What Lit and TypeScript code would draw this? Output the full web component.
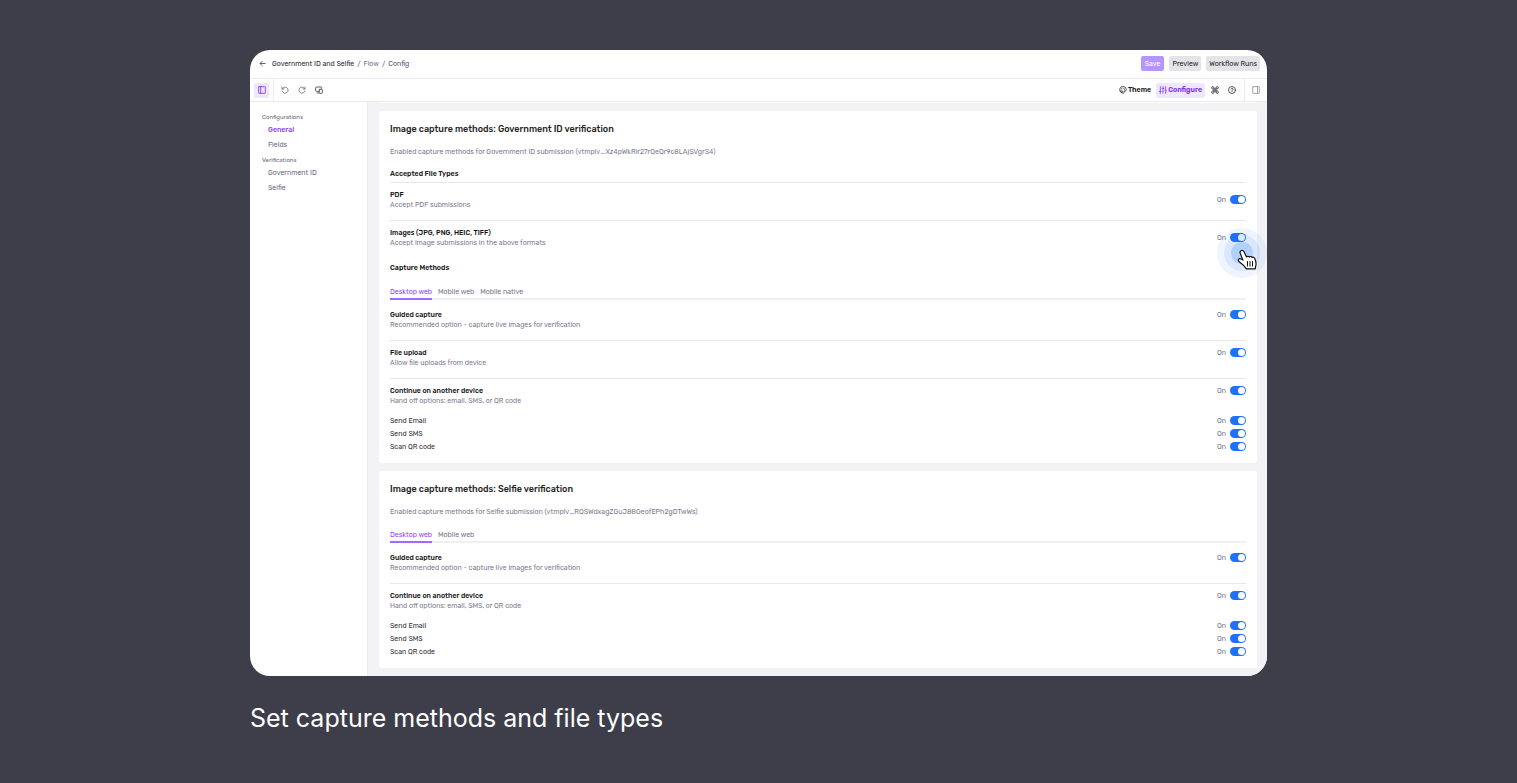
import { LitElement, html, css, svg, nothing } from "lit";
import { customElement, property } from "lit/decorators.js";

interface Option { id: string; title: string; note?: string }
interface Section {
  id: string;
  title: string;
  note: string;
  fileTypes?: Option[];
  tabs: string[];
  methods: Option[];
}

const HANDOFF: Option[] = [
  { id: "email", title: "Send Email" },
  { id: "sms", title: "Send SMS" },
  { id: "qr", title: "Scan QR code" },
];
const GUIDED: Option = { id: "guided", title: "Guided capture", note: "Recommended option - capture live images for verification" };
const UPLOAD: Option = { id: "upload", title: "File upload", note: "Allow file uploads from device" };
const CONTINUE: Option = { id: "continue", title: "Continue on another device", note: "Hand off options: email, SMS, or QR code" };

const SECTIONS: Section[] = [
  {
    id: "gov",
    title: "Image capture methods: Government ID verification",
    note: "Enabled capture methods for Government ID submission (vtmplv_Xz4pWkRir27rQeQr9c8LAjSVgrS4)",
    fileTypes: [
      { id: "pdf", title: "PDF", note: "Accept PDF submissions" },
      { id: "img", title: "Images (JPG, PNG, HEIC, TIFF)", note: "Accept image submissions in the above formats" },
    ],
    tabs: ["Desktop web", "Mobile web", "Mobile native"],
    methods: [GUIDED, UPLOAD, CONTINUE],
  },
  {
    id: "selfie",
    title: "Image capture methods: Selfie verification",
    note: "Enabled capture methods for Selfie submission (vtmplv_RQSWdxagZGuJ8BGeofEPh2gDTwWs)",
    tabs: ["Desktop web", "Mobile web"],
    methods: [GUIDED, CONTINUE],
  },
];

const icon = (body: unknown, size = 8) => html`<svg width=${size} height=${size} viewBox="0 0 24 24" fill="none"
  stroke="currentColor" stroke-width="2" stroke-linecap="round" stroke-linejoin="round" aria-hidden="true">${body}</svg>`;

const ICONS = {
  back: svg`<path d="M21 12H4M11 4.500L3.500 12l7.500 7.500" stroke-width="3.200"/>`,
  panelLeft: svg`<rect x="2" y="2" width="20" height="20" rx="1.500" stroke-width="2.400"/><path d="M8 2v20" stroke-width="2.400"/>`,
  panelRight: svg`<rect x="2" y="2" width="20" height="20" rx="1.500" stroke-width="2.400"/><path d="M16.500 2v20" stroke-width="2.400"/>`,
  undo: svg`<path d="M3 3v6h6M3.500 9a9.200 9.200 0 1 1-.3 6" stroke-width="2.400"/>`,
  redo: svg`<path d="M21 3v6h-6M20.500 9a9.200 9.200 0 1 0 .3 6" stroke-width="2.400"/>`,
  devices: svg`<path d="M11 16H4a2 2 0 0 1-2-2V5a2 2 0 0 1 2-2h14a2 2 0 0 1 2 2v2M6 21h5" stroke-width="2.600"/><rect x="13" y="10" width="9" height="12" rx="1.500" stroke-width="2.600"/>`,
  palette: svg`<path d="M8 20.500A10 10 0 1 1 22 11.500c0 2-1.300 3.500-3 3.500h-4v4c0 2-1 3-2.500 3S10 21 10 19.500V15H4" stroke-width="2.300"/><path d="M8 8.500h.1M12.500 6.500h.1M16.500 9.500h.1" stroke-width="3"/>`,
  sliders: svg`<path d="M4 2v12M4 19v3M12 2v3M12 10v12M20 2v10M20 17v5M1.500 16.500h5M9.500 7.500h5M17.500 14.500h5" stroke-width="2.400"/>`,
  command: svg`<path d="M9 9H5.500A3.500 3.500 0 1 1 9 5.500v13A3.500 3.500 0 1 1 5.500 15h13a3.500 3.500 0 1 1-3.500 3.500v-13A3.500 3.500 0 1 1 18.500 9z" stroke-width="2.300"/>`,
  help: svg`<circle cx="12" cy="12" r="10.500" stroke-width="2.200"/><path d="M9 9.500a3 3 0 1 1 4.500 2.600c-1 .6-1.500 1-1.500 2M12 17.500v.1" stroke-width="2.200"/>`,
};

@customElement("toggle-switch")
export class ToggleSwitch extends LitElement {
  @property() label = "";
  static styles = css`
    :host { display: block; flex: none; }
    label { display: flex; align-items: center; gap: 4px; color: #75758a; line-height: 9px; }
    input {
      appearance: none; margin: 0; width: 16px; height: 9px; border-radius: 5px; background: #d0d0d8;
      display: flex; align-items: center; padding: 1px; box-sizing: border-box;
    }
    input:checked { background: #1d72f8; justify-content: flex-end; }
    input::before { content: ""; width: 7px; height: 7px; border-radius: 50%; background: #fff; }
  `;
  render() {
    return html`<label><span>On</span><input type="checkbox" role="switch" aria-label=${this.label} checked></label>`;
  }
}

@customElement("capture-card")
export class CaptureCard extends LitElement {
  @property({ attribute: false }) section!: Section;
  static styles = css`
    :host { display: block; background: #fff; border-radius: 3px; padding: 12px 11px 10px; }
    h2, h3, h4, p { margin: 0; }
    h2 { font-size: 9px; line-height: 13px; font-weight: 500; color: #1f1f24; }
    h3 { font-size: 7px; line-height: 11px; font-weight: 600; color: #1f1f24; }
    h4 { font-size: 7px; line-height: 10px; font-weight: 500; color: #111114; }
    p { line-height: 9px; color: #7c7c90; }
    .note { margin: 11px 0 12px; }
    .ruled { padding-bottom: 3px; border-bottom: 1px solid #e8e8eb; }
    .spaced { margin-top: 3px; }
    .option { display: flex; justify-content: space-between; align-items: flex-start; padding: 7px 0 11px; border-bottom: 1px solid #e8e8eb; }
    .option:last-child { border-color: transparent; }
    .methods .option:last-child { padding-bottom: 8px; }
    .types toggle-switch { padding-top: 5px; }
    .tabs { display: flex; gap: 6px; margin: 14px 0 3px; border-bottom: 2px solid #f0f0f2; }
    button {
      font: inherit; line-height: 10px; color: #75758a; background: none; border: 0; padding: 0 0 1px;
      border-bottom: 2px solid transparent; margin-bottom: -2px;
    }
    button[aria-selected="true"] { color: #8b45ff; border-color: #a06bff; }
    .handoff { display: flex; justify-content: space-between; align-items: center; height: 13px; color: #303036; }
  `;
  private option(o: Option) {
    return html`<div class="option">
      <div><h4>${o.title}</h4><p>${o.note}</p></div>
      <toggle-switch label=${o.title}></toggle-switch>
    </div>`;
  }
  render() {
    const s = this.section;
    return html`
      <h2>${s.title}</h2>
      <p class="note">${s.note}</p>
      ${s.fileTypes ? html`
        <h3 class="ruled">Accepted File Types</h3>
        <div class="types">${s.fileTypes.map((o) => this.option(o))}</div>
        <h3 class="spaced">Capture Methods</h3>` : nothing}
      <div class="tabs" role="tablist">
        ${s.tabs.map((t, i) => html`<button role="tab" aria-selected=${i === 0}>${t}</button>`)}
      </div>
      <div class="methods">${s.methods.map((o) => this.option(o))}</div>
      ${HANDOFF.map((o) => html`<div class="handoff"><span>${o.title}</span><toggle-switch label=${o.title}></toggle-switch></div>`)}
    `;
  }
}

@customElement("app-root")
export class AppRoot extends LitElement {
  static styles = css`
    :host {
      display: block; box-sizing: border-box; min-height: 100vh; padding: 50px 250px 48px; background: #3d3e4a;
      font: 7px/10px Rubik, Inter, "Liberation Sans", sans-serif; color: #1f1f24;
    }
    .window { position: relative; border-radius: 20px; overflow: hidden; background: #fff; }
    svg { display: block; flex: none; }
    a { color: inherit; text-decoration: none; }
    button { font: inherit; color: inherit; border: 0; background: none; padding: 0; }
    header { display: flex; align-items: center; height: 27px; padding: 0 7px 1px 9px; border-bottom: 1px solid #ececef; }
    .crumbs { display: flex; align-items: center; gap: 3px; flex: 1; color: #55556a; }
    .crumbs .here { margin-left: 3px; color: #2a2a33; }
    .crumbs .muted { color: #75758a; }
    .actions { display: flex; gap: 5px; }
    .actions button { height: 15px; padding: 0 3px; border-radius: 2px; background: #e4e4e8; }
    .actions .save { padding: 0 4px; background: #b795ff; color: #fff; }
    .toolbar { display: flex; align-items: center; height: 22px; border-bottom: 1px solid #ececef; }
    .toolbar .edge { display: flex; align-items: center; align-self: stretch; box-sizing: border-box; width: 24px; padding: 0 4px; }
    .toolbar .left { border-right: 1px solid #ececef; margin-right: 3px; }
    .toolbar .right { width: 23px; border-left: 1px solid #ececef; padding: 0 7px; margin-left: 5px; color: #8c8c9c; }
    .pill { display: flex; align-items: center; justify-content: center; gap: 1px; height: 15px; padding: 0 3px; border-radius: 2px; }
    .pill.square { width: 15px; padding: 0; }
    .pill.on { background: #efe7ff; color: #7a2ff5; }
    .tools { display: flex; gap: 2px; flex: 1; color: #6a6a78; }
    .tools .strong { color: #44444e; }
    .modes { display: flex; gap: 2px; align-items: center; font-weight: 600; }
    .body { display: grid; grid-template-columns: 118px 1fr; }
    nav { padding: 10px 12px; color: #6c6c80; border-right: 1px solid #ececef; }
    nav ul { list-style: none; margin: 0 0 3px; padding: 0 0 0 6px; }
    nav li { height: 15px; line-height: 15px; }
    nav .active { color: #8b45ff; font-weight: 500; }
    nav h5 { margin: 0; font: inherit; font-size: 6px; }
    main { background: #f3f3f5; padding: 0 10px 8px 11px; display: grid; gap: 8px; }
    .previous { height: 1px; background: #fff; border-radius: 0 0 3px 3px; }
    .caption { margin: 26px 0 0; color: #fff; font: 25px/32px Inter, sans-serif; }
    .pointer { position: absolute; right: -1px; top: 177px; width: 52px; height: 52px; }
  `;
  render() {
    return html`
      <div class="window">
        <header>
          <div class="crumbs">
            <a href="#back" aria-label="Back">${icon(ICONS.back, 7)}</a>
            <span class="here">Government ID and Selfie</span>
            <span>/</span><a class="muted" href="#flow">Flow</a><span>/</span><span>Config</span>
          </div>
          <div class="actions">
            <button class="save">Save</button><button>Preview</button><button>Workflow Runs</button>
          </div>
        </header>
        <div class="toolbar">
          <div class="edge left"><button class="pill square on" aria-label="Toggle sidebar">${icon(ICONS.panelLeft)}</button></div>
          <div class="tools">
            <button class="pill square" aria-label="Undo">${icon(ICONS.undo)}</button>
            <button class="pill square" aria-label="Redo">${icon(ICONS.redo)}</button>
            <button class="pill square strong" aria-label="Devices">${icon(ICONS.devices)}</button>
          </div>
          <div class="modes">
            <button class="pill">${icon(ICONS.palette)}Theme</button>
            <button class="pill on">${icon(ICONS.sliders)}Configure</button>
            <button class="pill square" aria-label="Shortcuts">${icon(ICONS.command)}</button>
            <button class="pill square" aria-label="Help">${icon(ICONS.help)}</button>
          </div>
          <div class="edge right"><button aria-label="Toggle panel">${icon(ICONS.panelRight)}</button></div>
        </div>
        <div class="body">
          <nav>
            <h5>Configurations</h5>
            <ul><li><a class="active" href="#general">General</a></li><li><a href="#fields">Fields</a></li></ul>
            <h5>Verifications</h5>
            <ul><li><a href="#government-id">Government ID</a></li><li><a href="#selfie">Selfie</a></li></ul>
          </nav>
          <main>
            <div class="previous"></div>
            ${SECTIONS.map((s) => html`<capture-card .section=${s}></capture-card>`)}
          </main>
        </div>
        <svg class="pointer" viewBox="0 0 52 52" aria-hidden="true">
          <circle cx="26" cy="26" r="25" fill="#1d72f8" opacity=".07"/>
          <circle cx="26" cy="26" r="18" fill="#1d72f8" opacity=".1"/>
          <circle cx="26" cy="26" r="11" fill="#1d72f8" opacity=".2"/>
          <path fill="#fff" stroke="#111" stroke-width="1.200" stroke-linejoin="round"
            d="M25 23.800c1-.7 2.300-.4 2.900.7l2.700 5.400c.6-.8 2-.8 2.700.1.800-.8 2.100-.6 2.700.4 1-.5 2.100-.1 2.600.9 1 2 1.700 4 1.400 6.300l-.8 4.200h-8.700c-1.500-2.300-3.800-4.300-6.400-6.200-1.500-1.100-2.400-2.500-1.400-3.500.9-.9 2.500-.2 4.200 1l-2.700-6.800c-.4-1-.1-2 .8-2.500z"/>
          <path fill="none" stroke="#111" stroke-width="1" stroke-linecap="round" d="M31.500 34.500v4.500M34 34.500v4.500M36.500 34.500v4.500"/>
        </svg>
      </div>
      <h1 class="caption">Set capture methods and file types</h1>
    `;
  }
}
